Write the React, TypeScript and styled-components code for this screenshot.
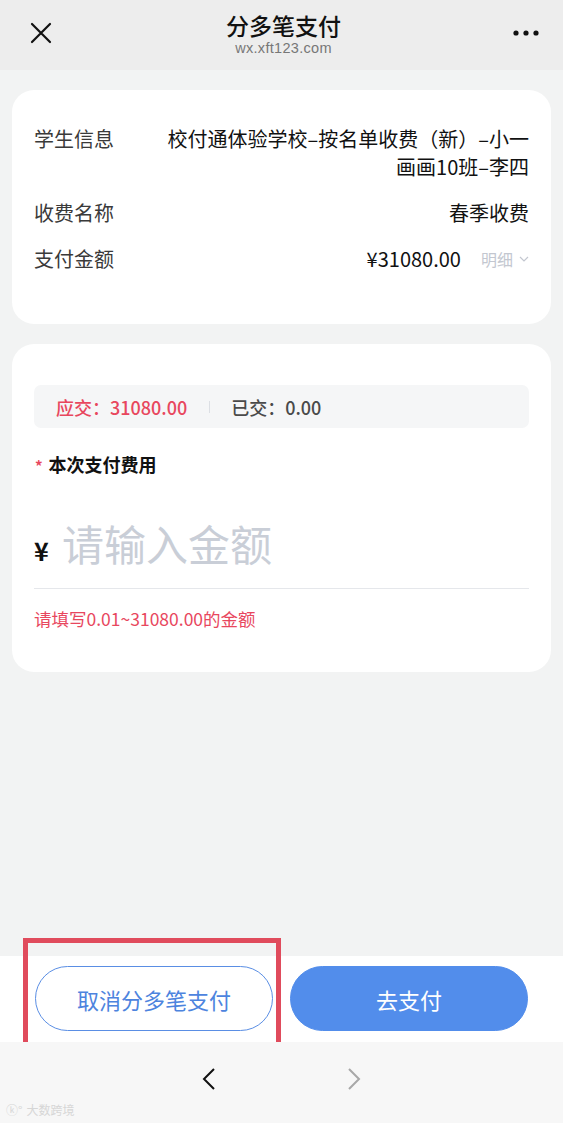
import React from 'react';
import styled, { createGlobalStyle } from 'styled-components';

const GlobalStyle = createGlobalStyle`
  * {
    box-sizing: border-box;
    margin: 0;
    padding: 0;
  }

  body {
    margin: 0;
    background: #f2f3f3;
    font-family: 'Noto Sans CJK SC', 'Noto Sans', sans-serif;
    -webkit-font-smoothing: antialiased;
  }
`;

const rows = [
  { label: '学生信息', lines: ['校付通体验学校–按名单收费（新）–小一', '画画10班–李四'] },
  { label: '收费名称', lines: ['春季收费'] },
];

const App: React.FC = () => {
  return (
    <Page>
      <GlobalStyle />
      <NavBar>
        <NavIcon>
          <svg width="22" height="22" viewBox="0 0 22 22">
            <path d="M2 2 L20 20 M20 2 L2 20" stroke="#111" strokeWidth="2.2" strokeLinecap="round" />
          </svg>
        </NavIcon>
        <NavTitle>
          <h1>分多笔支付</h1>
          <span>wx.xft123.com</span>
        </NavTitle>
        <NavIcon>
          <svg width="26" height="6" viewBox="0 0 26 6">
            <circle cx="3" cy="3" r="2.6" fill="#111" />
            <circle cx="13" cy="3" r="2.6" fill="#111" />
            <circle cx="23" cy="3" r="2.6" fill="#111" />
          </svg>
        </NavIcon>
      </NavBar>

      <Content>
        <InfoCard>
          {rows.map((row) => (
            <InfoRow key={row.label}>
              <Label>{row.label}</Label>
              <Value>
                {row.lines.map((line) => (
                  <div key={line}>{line}</div>
                ))}
              </Value>
            </InfoRow>
          ))}
          <InfoRow>
            <Label>支付金额</Label>
            <Value>
              <Amount>
                ¥31080.00
                <Detail>
                  明细
                  <svg width="10" height="6" viewBox="0 0 10 6">
                    <path d="M1 1 L5 5 L9 1" fill="none" stroke="#c3c7d0" strokeWidth="1.2" />
                  </svg>
                </Detail>
              </Amount>
            </Value>
          </InfoRow>
        </InfoCard>

        <PayCard>
          <Summary>
            <SummaryItem tone="due">应交：31080.00</SummaryItem>
            <SummaryDivider />
            <SummaryItem tone="paid">已交：0.00</SummaryItem>
          </Summary>
          <FieldLabel>
            <Required>*</Required>本次支付费用
          </FieldLabel>
          <InputRow>
            <Currency>¥</Currency>
            <AmountInput placeholder="请输入金额" />
          </InputRow>
          <ErrorText>请填写0.01~31080.00的金额</ErrorText>
        </PayCard>
      </Content>

      <Footer>
        <Highlight />
        <Button variant="outline">取消分多笔支付</Button>
        <Button variant="solid">去支付</Button>
      </Footer>

      <BrowserBar>
        <svg width="14" height="24" viewBox="0 0 14 24">
          <path d="M12 2 L2 12 L12 22" fill="none" stroke="#111" strokeWidth="2" />
        </svg>
        <svg width="14" height="24" viewBox="0 0 14 24">
          <path d="M2 2 L12 12 L2 22" fill="none" stroke="#a8a8a8" strokeWidth="2" />
        </svg>
        <Watermark>
          <span>ⓚ°</span>大数跨境
        </Watermark>
      </BrowserBar>
    </Page>
  );
};

const Page = styled.div`
  width: 563px;
  height: 1123px;
  display: flex;
  flex-direction: column;
  background: #f2f3f3;
  overflow: hidden;
`;

const NavBar = styled.header`
  height: 70px;
  flex-shrink: 0;
  background: #ededed;
  display: flex;
  align-items: center;
  justify-content: space-between;
  padding: 0 24px 4px 28px;
`;

const NavIcon = styled.span`
  display: inline-flex;
  align-items: center;
  justify-content: center;
  width: 26px;
  height: 26px;
`;

const NavTitle = styled.div`
  display: flex;
  flex-direction: column;
  align-items: center;

  h1 {
    font-size: 23px;
    font-weight: 500;
    color: #111;
    line-height: 30px;
  }

  span {
    font-family: 'Liberation Sans', Arial, sans-serif;
    font-size: 14.5px;
    color: #777;
    line-height: 16px;
    letter-spacing: 0.3px;
  }
`;

const Content = styled.main`
  flex: 1;
  display: flex;
  flex-direction: column;
  gap: 20px;
  padding: 20px 12px;
`;

const Card = styled.section`
  background: #fff;
  border-radius: 22px;
  padding: 0 22px;
`;

const InfoCard = styled(Card)`
  padding-top: 35px;
  padding-bottom: 51px;
  display: flex;
  flex-direction: column;
  gap: 18px;
`;

const InfoRow = styled.div`
  display: flex;
  justify-content: space-between;
  align-items: flex-start;
  font-size: 20px;
  line-height: 28px;
`;

const Label = styled.span`
  color: #3a3a3a;
  flex-shrink: 0;
`;

const Value = styled.div`
  color: #111;
  text-align: right;
  white-space: nowrap;
`;

const Amount = styled.div`
  display: flex;
  align-items: center;
`;

const Detail = styled.span`
  display: inline-flex;
  align-items: center;
  gap: 6px;
  margin-left: 20px;
  font-size: 16px;
  color: #c3c7d0;
`;

const PayCard = styled(Card)`
  padding-top: 41px;
  padding-bottom: 41px;
`;

const Summary = styled.div`
  height: 43px;
  display: flex;
  align-items: center;
  padding: 0 22px;
  background: #f5f6f7;
  border-radius: 7px;
`;

const SummaryItem = styled.span<{ tone: 'due' | 'paid' }>`
  font-size: 18px;
  font-weight: 500;
  color: ${({ tone }) => (tone === 'due' ? '#e8475e' : '#4a4a4a')};
`;

const SummaryDivider = styled.span`
  width: 1px;
  height: 12px;
  background: #dcdfe4;
  margin: 0 21px 0 22px;
`;

const FieldLabel = styled.div`
  margin-top: 21px;
  font-size: 18px;
  line-height: 26px;
  font-weight: 600;
  color: #111;
  display: flex;
  align-items: center;
`;

const Required = styled.span`
  color: #e8475e;
  font-size: 15px;
  margin: 4px 6px 0 1px;
`;

const InputRow = styled.div`
  margin-top: 35px;
  padding-bottom: 16px;
  border-bottom: 1px solid #e5e7eb;
  display: flex;
  align-items: center;
  height: 75px;
`;

const Currency = styled.span`
  font-size: 25px;
  font-weight: 700;
  color: #111;
  margin-top: 14px;
  width: 29px;
`;

const AmountInput = styled.input`
  flex: 1;
  border: none;
  outline: none;
  background: transparent;
  font-family: inherit;
  font-size: 42px;
  line-height: 60px;
  height: 60px;
  color: #111;

  &::placeholder {
    color: #c9ced7;
  }
`;

const ErrorText = styled.p`
  margin-top: 18px;
  font-size: 17.5px;
  line-height: 24px;
  color: #e8475e;
`;

const Footer = styled.footer`
  position: relative;
  height: 86px;
  flex-shrink: 0;
  background: #fff;
  display: grid;
  grid-template-columns: 1fr 1fr;
  gap: 17px;
  padding: 10px 35px 11px;
`;

const Highlight = styled.div`
  position: absolute;
  left: 23px;
  top: -18px;
  width: 258px;
  height: 110px;
  border: 5px solid #e04b5c;
  pointer-events: none;
`;

const Button = styled.button<{ variant: 'outline' | 'solid' }>`
  height: 65px;
  border-radius: 33px;
  font-family: inherit;
  font-size: 22px;
  cursor: pointer;
  border: 1px solid #5a8ee4;
  background: ${({ variant }) => (variant === 'solid' ? '#528deb' : '#fff')};
  border-color: ${({ variant }) => (variant === 'solid' ? '#528deb' : '#5a8ee4')};
  color: ${({ variant }) => (variant === 'solid' ? '#fff' : '#4d84de')};
`;

const BrowserBar = styled.nav`
  position: relative;
  height: 81px;
  flex-shrink: 0;
  background: #f7f7f7;
  display: flex;
  align-items: flex-start;
  justify-content: center;
  gap: 131px;
  padding-top: 25px;
`;

const Watermark = styled.div`
  position: absolute;
  left: 6px;
  bottom: 5px;
  font-size: 12px;
  color: #d6d6d6;

  span {
    margin-right: 4px;
  }
`;

export default App;
